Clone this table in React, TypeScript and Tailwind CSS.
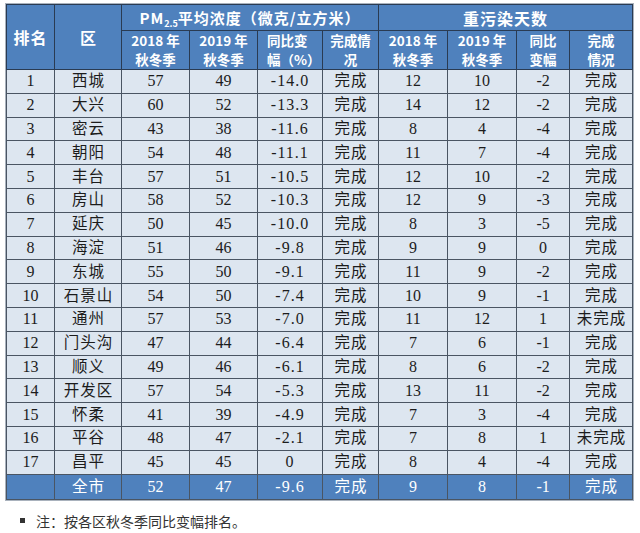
const rows: [string, string, string, string, string, string, string, string, string, string][] = [
  ["1", "西城", "57", "49", "-14.0", "完成", "12", "10", "-2", "完成"],
  ["2", "大兴", "60", "52", "-13.3", "完成", "14", "12", "-2", "完成"],
  ["3", "密云", "43", "38", "-11.6", "完成", "8", "4", "-4", "完成"],
  ["4", "朝阳", "54", "48", "-11.1", "完成", "11", "7", "-4", "完成"],
  ["5", "丰台", "57", "51", "-10.5", "完成", "12", "10", "-2", "完成"],
  ["6", "房山", "58", "52", "-10.3", "完成", "12", "9", "-3", "完成"],
  ["7", "延庆", "50", "45", "-10.0", "完成", "8", "3", "-5", "完成"],
  ["8", "海淀", "51", "46", "-9.8", "完成", "9", "9", "0", "完成"],
  ["9", "东城", "55", "50", "-9.1", "完成", "11", "9", "-2", "完成"],
  ["10", "石景山", "54", "50", "-7.4", "完成", "10", "9", "-1", "完成"],
  ["11", "通州", "57", "53", "-7.0", "完成", "11", "12", "1", "未完成"],
  ["12", "门头沟", "47", "44", "-6.4", "完成", "7", "6", "-1", "完成"],
  ["13", "顺义", "49", "46", "-6.1", "完成", "8", "6", "-2", "完成"],
  ["14", "开发区", "57", "54", "-5.3", "完成", "13", "11", "-2", "完成"],
  ["15", "怀柔", "41", "39", "-4.9", "完成", "7", "3", "-4", "完成"],
  ["16", "平谷", "48", "47", "-2.1", "完成", "7", "8", "1", "未完成"],
  ["17", "昌平", "45", "45", "0", "完成", "8", "4", "-4", "完成"],
];

const total = ["", "全市", "52", "47", "-9.6", "完成", "9", "8", "-1", "完成"];

const widths = [48, 67, 68, 68, 65, 56, 69, 69, 53, 63];

const th = "border border-[#2a3b52] text-white font-bold text-center align-middle p-0";
const td = "border border-[#4a5563] text-center align-middle p-0 leading-[18px]";

const spaced = (i: number) =>
  i === 1 || i === 5 || i === 9 ? "tracking-[1px] pl-[1px] text-[15.5px]" : i === 4 ? "tracking-[1px]" : "";

export default function App() {
  return (
    <div className="w-[640px] h-[533px] bg-white pt-[4px] pl-[6px] font-['Liberation_Serif','Noto_Sans_CJK_SC',serif]">
      <table className="table-fixed border-collapse w-[626px] outline outline-1 outline-[#a9b2bd]">
        <colgroup>
          {widths.map((w, i) => (
            <col key={i} style={{ width: w }} />
          ))}
        </colgroup>
        <thead className="bg-[#4f81bd] font-['Noto_Sans_CJK_SC',sans-serif]">
          <tr className="h-[26px] leading-[20px]">
            <th rowSpan={2} className={`${th} text-[16px] tracking-[1px]`}>排名</th>
            <th rowSpan={2} className={`${th} text-[16px]`}>区</th>
            <th colSpan={4} className={`${th} text-[15px] tracking-[1px]`}>
              PM<span className="text-[9px] tracking-normal relative top-[3px] leading-none">2.5</span>
              平均浓度（微克/立方米）
            </th>
            <th colSpan={4} className={`${th} text-[16px] tracking-[1px]`}>重污染天数</th>
          </tr>
          <tr className="h-[39px] text-[13.5px] leading-[19px]">
            <th className={th}>2018 年<br />秋冬季</th>
            <th className={th}>2019 年<br />秋冬季</th>
            <th className={`${th} text-left pl-[9px]`}>同比变<br />幅（%）</th>
            <th className={th}>完成情<br />况</th>
            <th className={th}>2018 年<br />秋冬季</th>
            <th className={th}>2019 年<br />秋冬季</th>
            <th className={th}>同比<br />变幅</th>
            <th className={th}>完成<br />情况</th>
          </tr>
        </thead>
        <tbody className="text-[16px] text-[#1c1c1c]">
          {rows.map((r) => (
            <tr key={r[0]} className="h-[23.8px] bg-[#dde6f0]">
              {r.map((c, i) => (
                <td key={i} className={`${td} ${spaced(i)}`}>
                  {c}
                </td>
              ))}
            </tr>
          ))}
          <tr className="h-[25px] bg-[#4f81bd] text-white">
            {total.map((c, i) => (
              <td key={i} className={`${td} border-[#2a3b52] ${spaced(i)}`}>
                {c}
              </td>
            ))}
          </tr>
        </tbody>
      </table>
      <div className="flex items-center mt-[11px] pl-[14px] font-['Noto_Sans_CJK_SC',sans-serif] text-[14px] leading-[20px] text-[#333]">
        <span className="w-[5px] h-[5px] bg-[#333] mr-[11px]" />
        <span>注：按各区秋冬季同比变幅排名。</span>
      </div>
    </div>
  );
}
